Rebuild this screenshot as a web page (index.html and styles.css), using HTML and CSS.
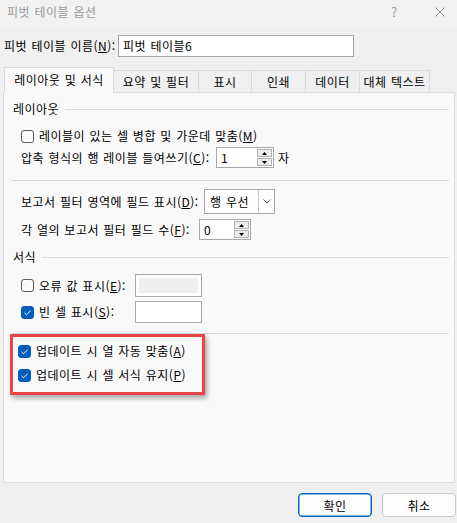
FILE: index.html
```html
<!DOCTYPE html>
<html lang="ko">
<head>
<meta charset="utf-8">
<title>피벗 테이블 옵션</title>
<link rel="stylesheet" href="styles.css">
</head>
<body>
<div class="titlebar">
  <span class="title">피벗 테이블 옵션</span>
  <span class="help">?</span>
  <svg class="close" viewBox="0 0 10 10" width="10" height="10"><path d="M0.5 0.5 L9.5 9.5 M9.5 0.5 L0.5 9.5" stroke="#8a8a8a" stroke-width="1" fill="none"/></svg>
</div>

<div class="name-row">
  <span class="name-label">피벗 테이블 이름(<u>N</u>):</span>
  <div class="textbox name-input">피벗 테이블6</div>
</div>

<div class="tabs">
  <div class="tab active t1">레이아웃 및 서식</div>
  <div class="tab t2">요약 및 필터</div>
  <div class="tab t3">표시</div>
  <div class="tab t4">인쇄</div>
  <div class="tab t5">데이터</div>
  <div class="tab t6">대체 텍스트</div>
</div>

<div class="panel">
  <div class="group-title g1"><span>레이아웃</span></div>

  <div class="row r1">
    <span class="cb"></span>
    <span class="cb-text">레이블이 있는 셀 병합 및 가운데 맞춤(<u>M</u>)</span>
  </div>

  <div class="row r2">
    <span class="lbl w195">압축 형식의 행 레이블 들여쓰기(<u>C</u>):</span>
    <div class="spinner s1">
      <span class="spin-val">1</span>
      <span class="spin-btns">
        <span class="spin-btn"><svg viewBox="0 0 7 4" width="7" height="4"><path d="M3.5 0 L7 4 L0 4 Z" fill="#000"/></svg></span>
        <span class="spin-btn"><svg viewBox="0 0 7 4" width="7" height="4"><path d="M0 0 L7 0 L3.5 4 Z" fill="#000"/></svg></span>
      </span>
    </div>
    <span class="unit">자</span>
  </div>

  <div class="sep s-a"></div>

  <div class="row r3">
    <span class="lbl w183">보고서 필터 영역에 필드 표시(<u>D</u>):</span>
    <div class="dropdown">
      <span class="dd-val">행 우선</span>
      <span class="dd-arrow"><svg viewBox="0 0 8 5" width="8" height="5"><path d="M0.5 0.5 L4 4 L7.5 0.5" stroke="#606060" stroke-width="1" fill="none"/></svg></span>
    </div>
  </div>

  <div class="row r4">
    <span class="lbl w178">각 열의 보고서 필터 필드 수(<u>F</u>):</span>
    <div class="spinner s2">
      <span class="spin-val">0</span>
      <span class="spin-btns">
        <span class="spin-btn"><svg viewBox="0 0 7 4" width="7" height="4"><path d="M3.5 0 L7 4 L0 4 Z" fill="#000"/></svg></span>
        <span class="spin-btn"><svg viewBox="0 0 7 4" width="7" height="4"><path d="M0 0 L7 0 L3.5 4 Z" fill="#000"/></svg></span>
      </span>
    </div>
  </div>

  <div class="group-title g2"><span>서식</span></div>

  <div class="row r5">
    <span class="cb-area">
      <span class="cb"></span>
      <span class="cb-text">오류 값 표시(<u>E</u>):</span>
    </span>
    <div class="valbox disabled"><span class="inner"></span></div>
  </div>

  <div class="row r6">
    <span class="cb-area">
      <span class="cb checked"><svg viewBox="0 0 13 13" width="13" height="13"><path d="M3.5 6.8 L5.6 8.8 L9.6 4.6" stroke="#fff" stroke-width="1" fill="none"/></svg></span>
      <span class="cb-text">빈 셀 표시(<u>S</u>):</span>
    </span>
    <div class="valbox"></div>
  </div>

  <div class="sep s-b"></div>

  <div class="highlight">
    <div class="row hr1">
      <span class="cb checked"><svg viewBox="0 0 13 13" width="13" height="13"><path d="M3.5 6.8 L5.6 8.8 L9.6 4.6" stroke="#fff" stroke-width="1" fill="none"/></svg></span>
      <span class="cb-text">업데이트 시 열 자동 맞춤(<u>A</u>)</span>
    </div>
    <div class="row hr2">
      <span class="cb checked"><svg viewBox="0 0 13 13" width="13" height="13"><path d="M3.5 6.8 L5.6 8.8 L9.6 4.6" stroke="#fff" stroke-width="1" fill="none"/></svg></span>
      <span class="cb-text">업데이트 시 셀 서식 유지(<u>P</u>)</span>
    </div>
  </div>
</div>

<div class="buttons">
  <button class="btn primary">확인</button>
  <button class="btn">취소</button>
</div>
</body>
</html>
```

FILE: styles.css
```css
* { box-sizing: border-box; }
html, body { margin: 0; padding: 0; }
body {
  width: 457px;
  height: 523px;
  overflow: hidden;
  background: #f0f0f0;
  font-family: "Noto Sans CJK KR", "Noto Sans", sans-serif;
  font-size: 12px;
  line-height: 16px;
  letter-spacing: 0.5px;
  word-spacing: 0.5px;
  color: #000;
}
u { text-decoration: underline; text-underline-offset: 1px; }

/* title bar */
.titlebar {
  height: 27px;
  display: flex;
  align-items: center;
  padding: 0 12px 3px 7px;
  color: #9a9a9a;
  background: #f2f2f2;
}
.title { flex: 1; }
.help { width: 12px; text-align: center; margin-right: 35px; font-size: 13px; letter-spacing: 0; }
.close { display: block; }

/* name row */
.name-row {
  display: flex;
  align-items: center;
  height: 22px;
  margin-top: 8px;
  padding-left: 4px;
}
.name-label { width: 114px; white-space: nowrap; }
.textbox { background: #fff; border: 1px solid #a5a5a5; }
.name-input {
  width: 236px;
  height: 22px;
  padding-left: 4px;
  display: flex;
  align-items: center;
}

/* tabs */
.tabs {
  position: relative;
  z-index: 1;
  display: flex;
  align-items: flex-end;
  height: 25px;
  margin-top: 10px;
  padding-left: 4px;
}
.tab {
  height: 22px;
  border: 1px solid #dadada;
  border-bottom: none;
  background: #f0f0f0;
  display: flex;
  align-items: center;
  justify-content: center;
  margin-left: -1px;
  white-space: nowrap;
}
.tab.active {
  height: 26px;
  margin-bottom: -1px;
  margin-left: 0;
  background: #f9f9f9;
  padding-bottom: 2px;
}
.t1 { width: 110px; }
.t2 { width: 86px; }
.t3 { width: 54px; }
.t4 { width: 55px; }
.t5 { width: 55px; }
.t6 { width: 71px; }

/* panel */
.panel {
  margin-left: 3px;
  width: 452px;
  height: 391px;
  border: 1px solid #dcdcdc;
  background: #f9f9f9;
}
.group-title {
  display: flex;
  align-items: center;
  height: 16px;
  padding-left: 9px;
  padding-right: 5px;
}
.group-title::after {
  content: "";
  flex: 1;
  height: 1px;
  background: #dadada;
  margin-left: 6px;
}
.g1 { margin-top: 8px; }
.g2 { margin-top: 9px; }

.sep { height: 1px; background: #dadada; margin-left: 8px; margin-right: 5px; }
.s-a { margin-top: 12px; }
.s-b { margin-top: 10px; }

.row {
  display: flex;
  align-items: center;
  padding-left: 17px;
  white-space: nowrap;
}
.r1 { height: 20px; margin-top: 9px; }
.r2 { height: 21px; margin-top: 1px; }
.r3 { height: 25px; margin-top: 8px; }
.r4 { height: 21px; margin-top: 5px; }
.r5 { height: 23px; margin-top: 9px; }
.r6 { height: 22px; margin-top: 4px; }

.lbl { display: block; }
.w195 { width: 195px; }
.w183 { width: 183px; }
.w178 { width: 178px; }

/* checkbox */
.cb {
  width: 13px;
  height: 13px;
  flex: none;
  border: 1px solid #5c5c5c;
  border-radius: 3px;
  background: #fbfbfb;
  margin-right: 5px;
  display: flex;
}
.cb.checked { background: #005fb8; border-color: #005fb8; }
.cb.checked svg { margin: -1px; display: block; }
.cb-area { width: 114px; display: flex; align-items: center; }

/* spinner */
.spinner {
  display: flex;
  align-items: center;
  height: 21px;
  border: 1px solid #a8a8a8;
  background: #fff;
  padding: 0 1px 0 4px;
}
.s1 { width: 58px; }
.s2 { width: 52px; }
.spin-val { flex: 1; }
.spin-btns { display: flex; flex-direction: column; gap: 1px; }
.spin-btn {
  width: 15px;
  height: 8px;
  border: 1px solid #b4b4b4;
  background: #ececec;
  display: flex;
  align-items: center;
  justify-content: center;
}
.spin-btn svg { display: block; width: 5px; height: 3px; }
.unit { margin-left: 4px; }

/* dropdown */
.dropdown {
  display: flex;
  align-items: stretch;
  width: 71px;
  height: 25px;
  border: 1px solid #a8a8a8;
  background: #fff;
}
.dd-val { flex: 1; display: flex; align-items: center; padding-left: 5px; }
.dd-arrow {
  width: 16px;
  border-left: 1px solid #c8c8c8;
  display: flex;
  align-items: center;
  justify-content: center;
}

/* value boxes */
.valbox {
  width: 67px;
  height: 100%;
  border: 1px solid #a8a8a8;
  background: #fff;
  padding: 3px;
}
.valbox .inner { display: block; width: 100%; height: 100%; background: #efefef; }

/* highlight */
.highlight {
  margin-left: 6px;
  width: 195px;
  height: 61px;
  border: 3px solid #e94446;
  padding: 4px 0 7px 0;
  box-shadow: 2px 3px 5px rgba(0, 0, 0, 0.35);
}
.highlight .row { padding-left: 5px; height: 20px; }
.highlight .hr2 { margin-top: 4px; }

/* buttons */
.buttons {
  display: flex;
  justify-content: flex-end;
  gap: 10px;
  margin-top: 10px;
  padding-right: 1px;
}
.btn {
  width: 74px;
  height: 24px;
  border: 1px solid #c9c9c9;
  border-radius: 4px;
  background: #fdfdfd;
  font-family: inherit;
  font-size: 12px;
  letter-spacing: 0.5px;
  color: #000;
  padding: 0;
}
.btn.primary { border-color: #0067c0; box-shadow: inset 0 0 0 0.5px #0067c0; }
```
